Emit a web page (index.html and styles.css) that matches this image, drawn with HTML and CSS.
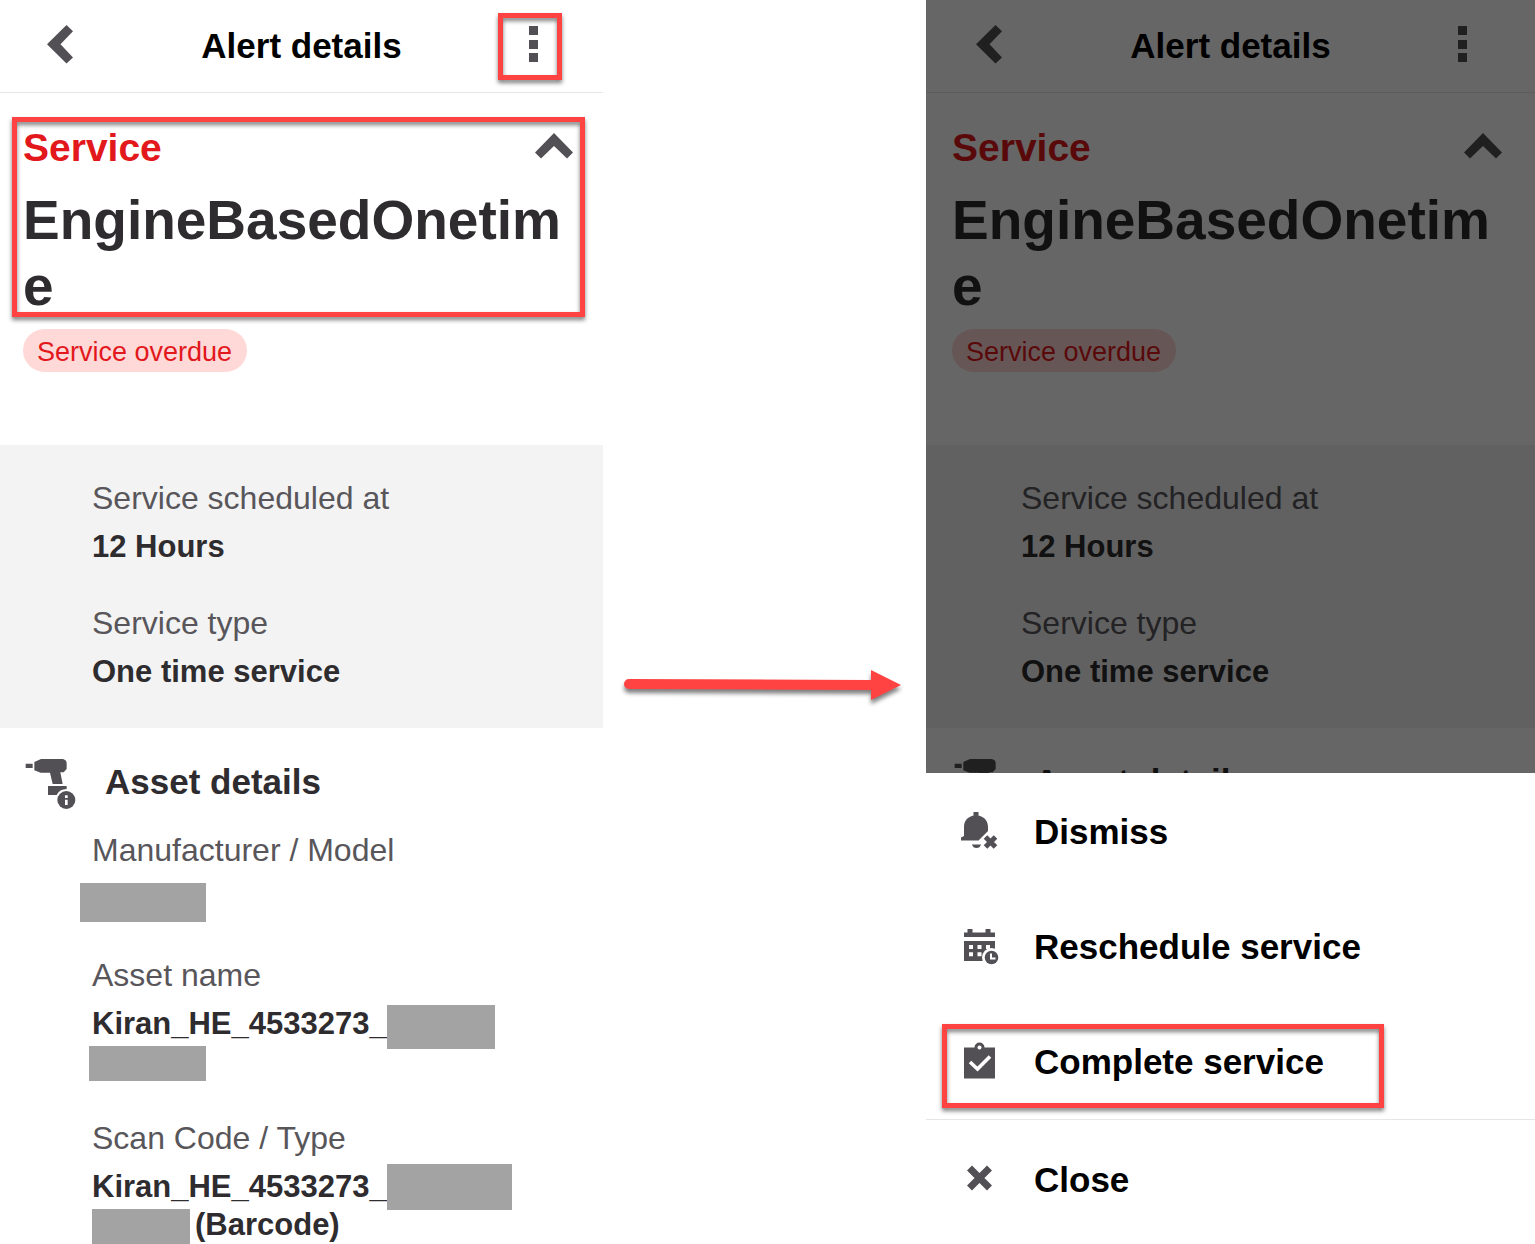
FILE: index.html
```html
<!DOCTYPE html>
<html lang="en">
<head>
    <meta charset="UTF-8">
    <meta name="viewport" content="width=device-width, initial-scale=1.0">
    <title>Alert details</title>
    <link rel="stylesheet" href="styles.css">
</head>
<body>
    <!-- Shared icons -->
    <svg class="icon-defs" aria-hidden="true">
        <symbol id="icon-back" viewBox="0 0 64 67">
            <path d="M25.500 12L6 31.300L25.500 50.500L32 44.500L19.500 31.300L32 18.300Z"/>
        </symbol>
        <symbol id="icon-more" viewBox="0 0 64 67">
            <path d="M31 13h9v9h-9zM31 27h9v9h-9zM31 40h9v9h-9z"/>
        </symbol>
        <symbol id="icon-up" viewBox="0 0 38 30">
            <path d="M19 0L38 19.500L32 25.500L19 13L6 25.500L0 19.500Z"/>
        </symbol>
        <symbol id="icon-drill" viewBox="69 42 162 162">
            <path d="M77 68h21v13H77zM103 63L123 54H189Q200 57 200 66V84L191 94H181L188 129H158L150 95H122L103 88Z"/>
            <path d="M144 135H200V144Q178 144 170 162H144Z"/>
            <circle cx="199" cy="177" r="27"/>
            <path fill="#fff" d="M195 163h8v8h-8zM195 176h8v16h-8z"/>
        </symbol>
    </svg>

    <main class="steps">
        <section class="phone">
            <header class="topbar">
                <button class="icon-btn" aria-label="Back"><svg><use href="#icon-back"/></svg></button>
                <h1>Alert details</h1>
                <button class="icon-btn" aria-label="More options"><svg><use href="#icon-more"/></svg><span class="highlight"></span></button>
            </header>

            <div class="summary">
                <div class="alert-title">
                    <div class="category">
                        <span>Service</span>
                        <button class="collapse" aria-label="Collapse"><svg><use href="#icon-up"/></svg></button>
                    </div>
                    <h2>EngineBasedOnetime</h2>
                    <span class="highlight"></span>
                </div>
                <span class="pill">Service overdue</span>
            </div>

            <dl class="details schedule">
                <dt>Service scheduled at</dt>
                <dd>12 Hours</dd>
                <dt>Service type</dt>
                <dd>One time service</dd>
            </dl>

            <div class="asset-head">
                <svg><use href="#icon-drill"/></svg>
                <h3>Asset details</h3>
            </div>
            <dl class="details">
                <dt>Manufacturer / Model</dt>
                <dd><div class="line"><span class="mask mask-model"></span></div></dd>
                <dt>Asset name</dt>
                <dd>
                    <div class="line">Kiran_HE_4533273_<span class="mask mask-name"></span></div>
                    <div class="line"><span class="mask mask-name-end"></span></div>
                </dd>
                <dt>Scan Code / Type</dt>
                <dd>
                    <div class="line">Kiran_HE_4533273_<span class="mask mask-code"></span></div>
                    <div class="line"><span class="mask mask-code-end"></span>(Barcode)</div>
                </dd>
            </dl>
        </section>

        <div class="arrow">
            <svg viewBox="0 0 277 32">
                <path d="M5 10L247 11V1L277 16L247 31V21L5 20A5 5 0 0 1 5 10Z"/>
            </svg>
        </div>

        <section class="phone phone-menu">
            <header class="topbar">
                <button class="icon-btn" aria-label="Back"><svg><use href="#icon-back"/></svg></button>
                <h1>Alert details</h1>
                <button class="icon-btn" aria-label="More options"><svg><use href="#icon-more"/></svg></button>
            </header>

            <div class="summary">
                <div class="alert-title">
                    <div class="category">
                        <span>Service</span>
                        <button class="collapse" aria-label="Collapse"><svg><use href="#icon-up"/></svg></button>
                    </div>
                    <h2>EngineBasedOnetime</h2>
                </div>
                <span class="pill">Service overdue</span>
            </div>

            <dl class="details schedule">
                <dt>Service scheduled at</dt>
                <dd>12 Hours</dd>
                <dt>Service type</dt>
                <dd>One time service</dd>
            </dl>

            <div class="asset-head">
                <svg><use href="#icon-drill"/></svg>
                <h3>Asset details</h3>
            </div>

            <div class="overlay"></div>

            <div class="sheet">
                <button class="action">
                    <svg viewBox="0 0 40 40">
                        <path d="M14.500 0h5v3.500C26 5 29 9.500 29 15v4L19.500 28.500H2V25.500L5 24V15C5 9.500 8 5 14.500 3.500Z"/>
                        <path d="M13 32.500h9Q21 36 17.500 36T13 32.500Z"/>
                        <path d="M26.500 25L36.500 35M36.500 25L26.500 35" stroke="currentColor" stroke-width="5"/>
                    </svg>
                    <span>Dismiss</span>
                </button>
                <button class="action">
                    <svg viewBox="0 0 40 40">
                        <path d="M5 5.500h3.500V2h5v3.500h13V2h5v3.500H36V10H5zM5 14H36V34H5z"/>
                        <path fill="#fff" d="M10 18h4v4h-4zM18.500 18h4v4h-4zM27 18h4v4h-4zM10 25.300h4v4h-4zM18.500 25.300h4v4h-4z"/>
                        <circle cx="32.500" cy="30.500" r="9.500" fill="#fff"/>
                        <circle cx="32.500" cy="30.500" r="6.800"/>
                        <path d="M32 26.500V31.500H36.500" fill="none" stroke="#fff" stroke-width="2"/>
                    </svg>
                    <span>Reschedule service</span>
                </button>
                <button class="action">
                    <svg viewBox="0 0 40 40">
                        <path d="M5 5.500H15.500A5 5 0 0 1 25.500 5.500H36V36.500H5z"/>
                        <circle cx="20.500" cy="5.500" r="2" fill="#fff"/>
                        <path d="M11 20L18.500 27L31 14.500" fill="none" stroke="#fff" stroke-width="3.600"/>
                    </svg>
                    <span>Complete service</span>
                    <span class="highlight"></span>
                </button>
                <button class="action action-close">
                    <svg viewBox="0 0 40 40">
                        <path d="M10.500 8L30.500 28M30.500 8L10.500 28" stroke="currentColor" stroke-width="7"/>
                    </svg>
                    <span>Close</span>
                </button>
            </div>
        </section>
    </main>
</body>
</html>
```
FILE: styles.css
```css
* {
    margin: 0;
    padding: 0;
    box-sizing: border-box;
    font-family: 'Liberation Sans', Arial, sans-serif;
}

body {
    background: #fff;
    color: #2e2c2f;
}

button {
    background: none;
    border: none;
    color: inherit;
    cursor: pointer;
}

svg {
    display: block;
    fill: #525054;
    color: #525054;
}

.icon-defs {
    position: absolute;
    width: 0;
    height: 0;
}

.steps {
    display: grid;
    grid-template-columns: 603fr 323fr 609fr;
    min-height: 100vh;
}

.phone {
    --gutter: 23px;
    position: relative;
    min-width: 0;
    overflow: hidden;
}

.phone-menu {
    --gutter: 26px;
}

/* Red call-out frame */
.highlight {
    position: absolute;
    inset: 0;
    border: 5px solid #ff4343;
    filter: drop-shadow(0 3px 2px rgba(0, 0, 0, 0.5));
    pointer-events: none;
}

.topbar {
    display: flex;
    align-items: center;
    justify-content: space-between;
    height: 93px;
    padding: 0 calc(var(--gutter) + 18px);
    border-bottom: 1px solid #e6e6e6;
}

.topbar h1 {
    font-size: 35px;
    line-height: 46px;
    color: #000;
}

.icon-btn {
    position: relative;
}

.icon-btn svg {
    width: 64px;
    height: 67px;
}

.summary {
    padding: 24px 0 73px;
}

.alert-title {
    position: relative;
    margin: 0 calc(var(--gutter) - 5px) 10px calc(var(--gutter) - 11px);
    padding: 7px 12px 0 11px;
}

.alert-title .highlight {
    bottom: 2px;
}

.category {
    display: flex;
    align-items: center;
    justify-content: space-between;
    font-size: 39px;
    font-weight: bold;
    line-height: 48px;
    color: #e2181c;
}

.collapse svg {
    width: 38px;
    height: 30px;
}

.alert-title h2 {
    margin-top: 15px;
    font-size: 55px;
    line-height: 66px;
    word-break: break-all;
}

.pill {
    display: block;
    width: fit-content;
    margin-left: var(--gutter);
    padding: 3px 15px 0 14px;
    border-radius: 22px;
    background: #ffd9d7;
    color: #e2181c;
    font-size: 27px;
    line-height: 40px;
}

.details {
    padding-left: calc(var(--gutter) + 69px);
}

.details dt {
    margin-bottom: 10px;
    font-size: 32px;
    line-height: 40px;
    color: #58565a;
}

.details dd {
    font-size: 31px;
    font-weight: bold;
    line-height: 38px;
}

.details dd + dt {
    margin-top: 37px;
}

.schedule {
    padding-top: 33px;
    padding-bottom: 37px;
    background: #f3f3f3;
}

.asset-head {
    display: flex;
    align-items: center;
    gap: 28px;
    padding: 27px 0 21px var(--gutter);
}

.asset-head svg {
    width: 54px;
    height: 54px;
}

.asset-head h3 {
    font-size: 35px;
    line-height: 46px;
}

/* Hidden personal data */
.line {
    display: flex;
    align-items: flex-start;
    height: 38px;
}

.mask {
    flex: none;
    background: #a3a3a3;
}

.mask:first-child {
    margin-top: 3px;
}

.line .mask-model {
    width: 126px;
    height: 39px;
    margin-left: -12px;
}

.line .mask-name {
    width: 108px;
    height: 44px;
    margin: 0;
}

.line .mask-name-end {
    width: 117px;
    height: 35px;
    margin-left: -3px;
}

.line .mask-code {
    align-self: center;
    width: 125px;
    height: 46px;
    margin: 0;
}

.line .mask-code-end {
    width: 98px;
    height: 36px;
    margin-right: 5px;
}

.arrow {
    padding: 669px 25px 0 21px;
}

.arrow svg {
    width: 100%;
    overflow: visible;
    fill: #ff4343;
    filter: drop-shadow(0 4px 2px rgba(0, 0, 0, 0.5));
}

.overlay {
    position: absolute;
    inset: 0;
    background: rgba(0, 0, 0, 0.6);
}

.sheet {
    position: absolute;
    left: 0;
    right: 0;
    bottom: 0;
    padding: 1px 0 7px;
    background: #fff;
}

.action {
    position: relative;
    display: flex;
    align-items: center;
    gap: 35px;
    width: 100%;
    height: 115px;
    padding-left: 33px;
    font-size: 35px;
    font-weight: bold;
    color: #000;
    text-align: left;
}

.action svg {
    width: 40px;
    height: 40px;
}

.action .highlight {
    inset: 20px 151px 11px 16px;
}

.action-close {
    height: 118px;
    padding-top: 2px;
    border-top: 1px solid #e6e6e6;
}
```
